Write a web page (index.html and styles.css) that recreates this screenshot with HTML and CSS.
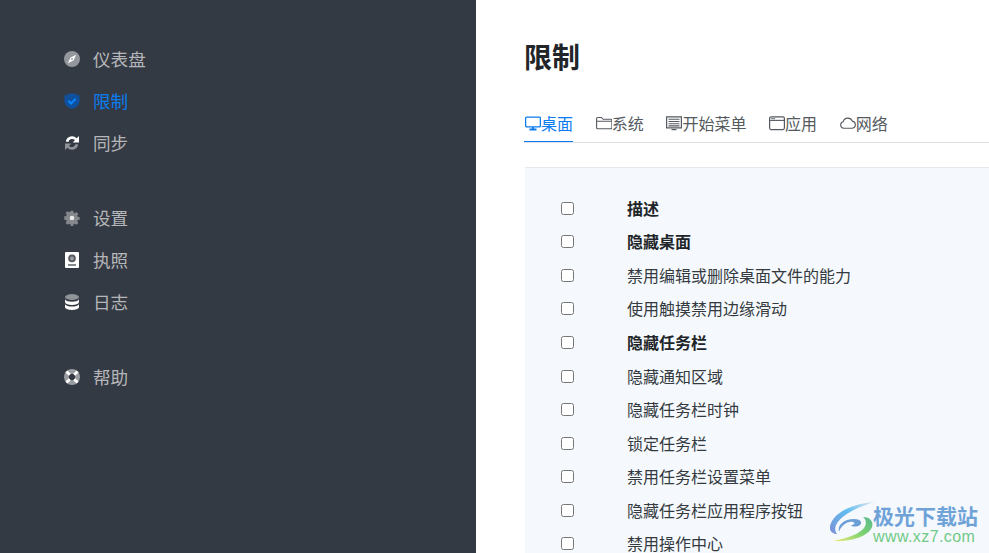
FILE: index.html
```html
<!DOCTYPE html>
<html lang="zh-CN">
  <head>
    <meta charset="UTF-8" />
    <title>限制</title>
    <link rel="stylesheet" href="styles.css">
  </head>
  <body>
    <div class="container">
      <aside class="sidebar">
        <ul class="menu">
          <li class="menu__item">
            <svg class="menu__icon" viewBox="0 0 16 16"><circle cx="8" cy="8" r="8" fill="#94979b"/><path d="M12.200 3.800 9.500 9.500 3.800 12.200 6.500 6.500Z" fill="#fff"/><circle cx="8" cy="8" r=".9" fill="#94979b"/></svg>
            <span>仪表盘</span>
          </li>
          <li class="menu__item menu__item--active">
            <svg class="menu__icon" viewBox="0 0 16 16"><path d="M8 0 15.600 2.600V8c0 4-3.300 6.800-7.600 8C3.700 14.800.4 12 .4 8V2.600Z" fill="#0f4f9c"/><path d="M4.300 7.800 7 10.500l4.700-4.700" fill="none" stroke="#0a84ff" stroke-width="2"/></svg>
            <span>限制</span>
          </li>
          <li class="menu__item">
            <svg class="menu__icon" viewBox="0 0 16 16"><path d="M1.800 6.500A6.400 6.400 0 0 1 12.700 3.300L15 1v6.400H8.700l2.300-2.300A4 4 0 0 0 4.300 6.900Z" fill="#fff"/><path d="M14.200 9.500A6.400 6.400 0 0 1 3.300 12.700L1 15V8.600h6.300L5 10.900a4 4 0 0 0 6.700-1.800Z" fill="#8f9296"/></svg>
            <span>同步</span>
          </li>
        </ul>
        <ul class="menu">
          <li class="menu__item">
            <svg class="menu__icon" viewBox="0 0 16 16"><path d="M6.600 0h2.800l.4 2.100 1.400.6 1.800-1.200 2 2-1.200 1.800.6 1.400 2.100.4v2.800l-2.100.4-.6 1.400 1.200 1.800-2 2-1.800-1.200-1.400.6-.4 2.100H6.600l-.4-2.100-1.400-.6L3 15.500l-2-2 1.200-1.800-.6-1.400L-.5 9.900V6.100l2.100-.4.6-1.400L1 2.500l2-2 1.800 1.200 1.400-.6Z" transform="translate(.7 .7) scale(.91)" fill="#84878b"/><circle cx="8" cy="8" r="2.300" fill="#e8e8e8"/></svg>
            <span>设置</span>
          </li>
          <li class="menu__item">
            <svg class="menu__icon" viewBox="0 0 16 16"><rect x="1" y="0" width="14" height="16" rx="1" fill="#fff"/><circle cx="8" cy="6.400" r="3.800" fill="#555a60"/><circle cx="8" cy="6.400" r="2" fill="#9a9da1"/><rect x="4" y="12.400" width="8" height="1.200" fill="#343a43"/></svg>
            <span>执照</span>
          </li>
          <li class="menu__item">
            <svg class="menu__icon" viewBox="0 0 16 16"><ellipse cx="8" cy="3" rx="7" ry="3" fill="#8f9296"/><path d="M1 5.200c1 1.800 3.500 2.500 7 2.500s6-.7 7-2.500v3.100c-.6 1.700-3.300 2.600-7 2.600s-6.400-.9-7-2.600Z" fill="#fff"/><path d="M1 10.200c1 1.700 3.500 2.400 7 2.400s6-.7 7-2.400v3c-.6 1.800-3.300 2.800-7 2.800s-6.400-1-7-2.800Z" fill="#fff"/></svg>
            <span>日志</span>
          </li>
        </ul>
        <ul class="menu">
          <li class="menu__item">
            <svg class="menu__icon" viewBox="0 0 16 16"><circle cx="8" cy="8" r="8" fill="#9a9da1"/><circle cx="8" cy="8" r="3.200" fill="#343a43"/><path d="M2.400 2.400 5.800 5.800M13.600 2.400 10.200 5.800M2.400 13.600 5.800 10.200M13.600 13.600 10.200 10.200" stroke="#fff" stroke-width="2.800"/></svg>
            <span>帮助</span>
          </li>
        </ul>
      </aside>

      <main class="content">
        <h1 class="title">限制</h1>
        <nav class="tabs">
          <div class="tab tab--active">
            <svg class="tab__icon" viewBox="0 0 16 16"><rect x=".6" y="2.200" width="14.800" height="9.600" rx="1.200" fill="none" stroke="currentColor" stroke-width="1.300"/><path d="M4.500 14.500h7M8 12v2.500" stroke="currentColor" stroke-width="1.800"/></svg>
            桌面
          </div>
          <div class="tab">
            <svg class="tab__icon" viewBox="0 0 16 16"><path d="M.6 12.800V3.500c0-.6.400-1 1-1h3.900l1.600 1.800h7.800c.6 0 1 .4 1 1v7.500c0 .6-.4 1-1 1H1.600c-.6 0-1-.4-1-1ZM.6 6.300h14.800" fill="none" stroke="currentColor" stroke-width="1.100"/></svg>
            系统
          </div>
          <div class="tab">
            <svg class="tab__icon" viewBox="0 0 16 16"><path d="M.6 1.800h14.800v11H.6Z" fill="none" stroke="currentColor" stroke-width="1.200"/><path d="M2.500 4.300h11M2.500 6.500h11M2.500 8.700h11M2.500 10.900h11" stroke="currentColor" stroke-width="1.100"/><path d="M5.500 14.600h5" stroke="currentColor" stroke-width="1.200"/></svg>
            开始菜单
          </div>
          <div class="tab">
            <svg class="tab__icon" viewBox="0 0 16 16"><rect x=".6" y="1.800" width="14.800" height="12.800" rx="1.500" fill="none" stroke="currentColor" stroke-width="1.200"/><path d="M.6 5.400h14.800" stroke="currentColor" stroke-width="1.100"/><path d="M2.200 3.700h4" stroke="currentColor" stroke-width=".9"/></svg>
            应用
          </div>
          <div class="tab">
            <svg class="tab__icon" viewBox="0 0 16 16"><path d="M3.800 13.200a3.300 3.300 0 0 1-.6-6.500 4.800 4.800 0 0 1 9.100-.6 3.600 3.600 0 0 1 .1 7.100Z" fill="none" stroke="currentColor" stroke-width="1.100"/></svg>
            网络
          </div>
        </nav>

        <section class="panel">
          <label class="row row--bold"><input type="checkbox" /><span>描述</span></label>
          <label class="row row--bold"><input type="checkbox" /><span>隐藏桌面</span></label>
          <label class="row"><input type="checkbox" /><span>禁用编辑或删除桌面文件的能力</span></label>
          <label class="row"><input type="checkbox" /><span>使用触摸禁用边缘滑动</span></label>
          <label class="row row--bold"><input type="checkbox" /><span>隐藏任务栏</span></label>
          <label class="row"><input type="checkbox" /><span>隐藏通知区域</span></label>
          <label class="row"><input type="checkbox" /><span>隐藏任务栏时钟</span></label>
          <label class="row"><input type="checkbox" /><span>锁定任务栏</span></label>
          <label class="row"><input type="checkbox" /><span>禁用任务栏设置菜单</span></label>
          <label class="row"><input type="checkbox" /><span>隐藏任务栏应用程序按钮</span></label>
          <label class="row"><input type="checkbox" /><span>禁用操作中心</span></label>
        </section>
      </main>
    </div>

    <div class="watermark">
      <svg class="watermark__logo" viewBox="0 0 45 42">
        <defs>
          <linearGradient id="swirlTop" x1="1" y1="0" x2="0" y2="1">
            <stop offset="0" stop-color="#e3e8ee"/>
            <stop offset=".45" stop-color="#62bdf0"/>
            <stop offset="1" stop-color="#7d8fd6"/>
          </linearGradient>
          <linearGradient id="swirlBottom" x1="0" y1="1" x2="1" y2="0">
            <stop offset="0" stop-color="#f0ec7a"/>
            <stop offset=".5" stop-color="#7fd36f"/>
            <stop offset="1" stop-color="#58b98e"/>
          </linearGradient>
        </defs>
        <path d="M45 0C28 1 4 8 0 24c-1 5 3 8 7 8C3 27 6 20 14 14 22 8 34 3 45 0Z" fill="url(#swirlTop)"/>
        <path d="M9 30c-2-7 5-13 15-13 6 0 9 3 6 6-3 2-8 2-9 0 3 0 5-2 2-3-6-1-12 4-14 10Z" fill="#6c9fd8"/>
        <path d="M3 39c9-2 23-5 29-11 5-4 5-10 1-13 7 0 11 5 9 10C38 35 20 40 3 39Z" fill="url(#swirlBottom)"/>
      </svg>
      <div class="watermark__text">
        <div class="watermark__name">极光下载站</div>
        <div class="watermark__url">www.xz7.com</div>
      </div>
    </div>
  </body>
</html>
```

FILE: styles.css
```css
* {
  margin: 0;
  padding: 0;
  box-sizing: border-box;
}

html,
body {
  height: 100%;
  overflow: hidden;
}

body {
  font-family: "Noto Sans CJK SC", "Liberation Sans", sans-serif;
  color: #212529;
  background: #fff;
}

.container {
  display: flex;
  height: 553px;
}

.sidebar {
  flex: 0 0 476px;
  background-color: #343a43;
  padding-top: 37px;
}

.menu {
  list-style-type: none;
  margin-bottom: 33px;
}

.menu__item {
  display: flex;
  align-items: center;
  gap: 13px;
  height: 42px;
  padding-left: 64px;
  font-size: 17.6px;
  color: #b4b6b9;
}

.menu__item--active {
  color: #0a7cf0;
}

.menu__icon {
  width: 16px;
  height: 16px;
  margin-top: 2px;
  flex: none;
}

.content {
  flex: 1;
  min-width: 0;
  padding-left: 48px;
}

.title {
  font-size: 28px;
  font-weight: 700;
  line-height: 40px;
  margin-top: 36px;
}

.tabs {
  display: flex;
  gap: 22.7px;
  height: 38px;
  margin-top: 29px;
  border-bottom: 1px solid #dfe1e3;
}

.tab {
  display: flex;
  align-items: center;
  height: 37px;
  font-size: 16px;
  color: #555a60;
  border-bottom: 1px solid transparent;
}

.tab--active {
  padding-left: 1px;
  color: #0a7cf0;
  border-bottom-color: #0a7cf0;
}

.tab__icon {
  width: 16px;
  height: 16px;
  flex: none;
}

.panel {
  margin: 24px 0 0 1px;
  padding-top: 23.25px;
  height: 400px;
  background-color: #f5f9fd;
  border-top: 1px solid #e5e9ee;
}

.row {
  display: flex;
  align-items: center;
  height: 33.6px;
  padding-left: 36px;
  font-size: 16px;
  color: #343a40;
}

.row input {
  width: 13px;
  height: 13px;
  margin: 0 53px 0 0;
  flex: none;
}

.row span {
  margin-bottom: 1px;
}

.row--bold {
  font-weight: 700;
  color: #212529;
}

.watermark {
  position: absolute;
  left: 830px;
  top: 502px;
  display: flex;
  align-items: flex-start;
}

.watermark__logo {
  width: 45px;
  height: 42px;
  margin-right: -2px;
  flex: none;
}

.watermark__text {
  padding-top: 1px;
}

.watermark__name {
  font-size: 21px;
  font-weight: 700;
  line-height: 24px;
  color: #6fa3d8;
}

.watermark__url {
  font-family: "Liberation Sans", sans-serif;
  font-size: 16px;
  line-height: 16px;
  margin-top: 2px;
  letter-spacing: .4px;
  color: #71c987;
}
```
